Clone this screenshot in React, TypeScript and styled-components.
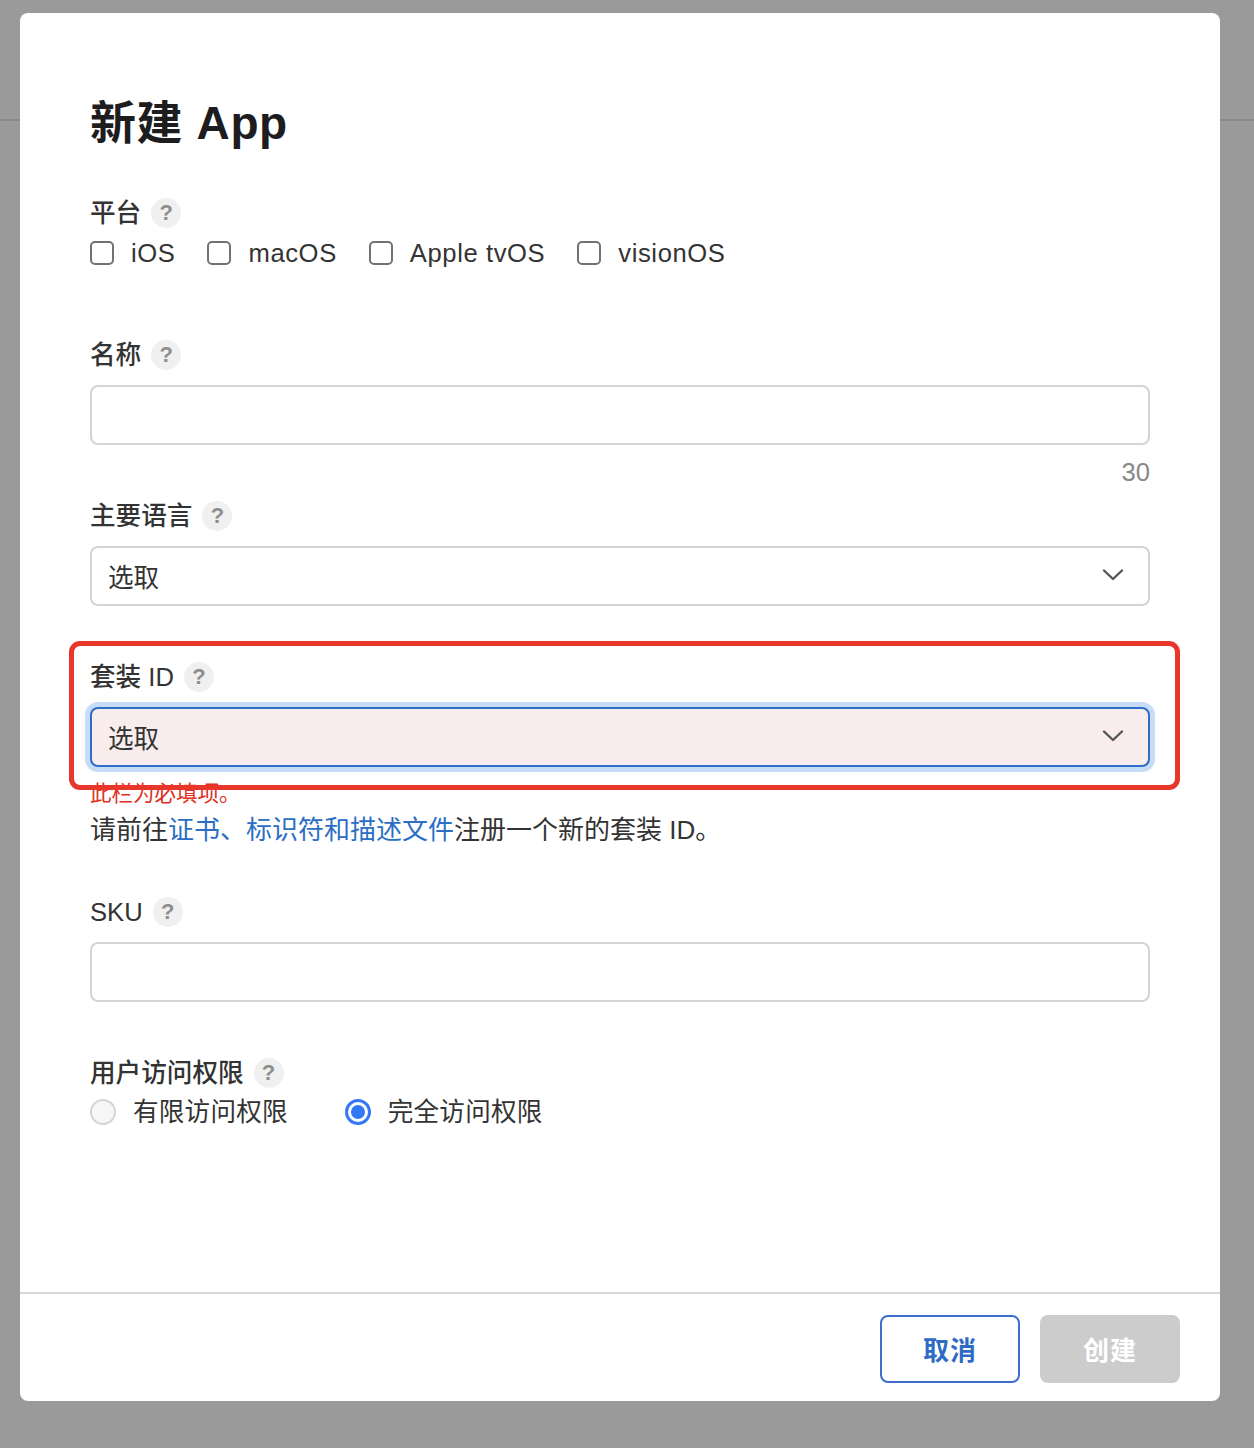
import React from "react";
import styled, { createGlobalStyle } from "styled-components";

const GlobalStyle = createGlobalStyle`
  html, body {
    margin: 0;
    padding: 0;
  }
  body {
    font-family: "Liberation Sans", "Noto Sans CJK SC", sans-serif;
    background: #9a9a9a;
  }
`;

const Page = styled.div`
  width: 1254px;
  height: 1448px;
  box-sizing: border-box;
  padding: 13px 0 0 20px;
  background: linear-gradient(
    to bottom,
    transparent 119px,
    #8a8a8a 119px,
    #8a8a8a 121px,
    transparent 121px
  );
`;

const Modal = styled.div`
  width: 1200px;
  height: 1388px;
  background: #fff;
  border-radius: 8px;
  display: flex;
  flex-direction: column;
  overflow: hidden;
`;

const Body = styled.div`
  flex: 1;
  padding: 82px 70px 0 70px;
  display: flex;
  flex-direction: column;
`;

const Title = styled.h1`
  margin: 0 0 46px;
  font-size: 46px;
  line-height: 56px;
  font-weight: 700;
  color: #1d1d1f;
  letter-spacing: 0.6px;
`;

const Field = styled.div<{ $gap?: number }>`
  position: relative;
  display: flex;
  flex-direction: column;
  margin-bottom: ${(p) => p.$gap ?? 0}px;
`;

const LabelRow = styled.div<{ $below?: number }>`
  display: flex;
  align-items: center;
  gap: 10px;
  height: 32px;
  line-height: 30px;
  margin-bottom: ${(p) => p.$below ?? 14}px;
  font-size: 25.6px;
  font-weight: 500;
  color: #333;
`;

const Help = styled.span`
  width: 30px;
  height: 30px;
  border-radius: 50%;
  background: #f0f0f0;
  color: #8e8e8e;
  font-size: 22px;
  font-weight: 700;
  display: inline-flex;
  align-items: center;
  justify-content: center;
`;

const OptionRow = styled.div<{ $gap: number }>`
  display: flex;
  align-items: center;
  gap: ${(p) => p.$gap}px;
  height: 32px;
  line-height: 30px;
`;

const Option = styled.label<{ $spacing?: number }>`
  display: flex;
  align-items: center;
  gap: 17px;
  font-size: 25.6px;
  color: #333;
  letter-spacing: ${(p) => p.$spacing ?? 0.2}px;
`;

const CheckBox = styled.span`
  width: 24px;
  height: 24px;
  box-sizing: border-box;
  border: 2px solid #727272;
  border-radius: 5px;
  background: #fff;
`;

const Radio = styled.span<{ $on?: boolean }>`
  width: 26px;
  height: 26px;
  box-sizing: border-box;
  border-radius: 50%;
  border: ${(p) => (p.$on ? "3px solid #3478f6" : "2px solid #d4d4d4")};
  background: ${(p) => (p.$on ? "#fff" : "#f6f6f6")};
  display: inline-flex;
  align-items: center;
  justify-content: center;
  &::after {
    content: "";
    display: ${(p) => (p.$on ? "block" : "none")};
    width: 14px;
    height: 14px;
    border-radius: 50%;
    background: #3478f6;
  }
`;

const TextBox = styled.div`
  height: 60px;
  box-sizing: border-box;
  border: 2px solid #d4d4d4;
  border-radius: 8px;
  background: #fff;
`;

const Select = styled.div<{ $invalid?: boolean }>`
  height: 60px;
  box-sizing: border-box;
  border: 2px solid ${(p) => (p.$invalid ? "#2e6ecb" : "#d4d4d4")};
  border-radius: 8px;
  background: ${(p) => (p.$invalid ? "#f8ecec" : "#fff")};
  box-shadow: ${(p) => (p.$invalid ? "0 0 0 5px #c6dcf7" : "none")};
  display: flex;
  align-items: center;
  justify-content: space-between;
  padding: 0 24px 2px 16px;
  font-size: 25.6px;
  color: #333;
`;

const Counter = styled.div`
  margin-top: 12px;
  text-align: right;
  font-size: 25.6px;
  line-height: 30px;
  height: 32px;
  color: #888;
  margin-bottom: 11px;
`;

const ErrorText = styled.div`
  margin-top: 14px;
  font-size: 21.5px;
  line-height: 26px;
  height: 28px;
  color: #e0301e;
`;

const Hint = styled.div`
  margin-top: 6px;
  font-size: 26px;
  line-height: 30px;
  height: 32px;
  color: #333;
`;

const Link = styled.a`
  color: #2a6ec6;
  text-decoration: none;
`;

const Annotation = styled.div`
  position: absolute;
  top: -20px;
  left: -21px;
  width: 1111px;
  height: 149px;
  box-sizing: border-box;
  border: 5px solid #e8362a;
  border-radius: 11px;
  pointer-events: none;
`;

const Footer = styled.div`
  border-top: 2px solid #d8d8d8;
  padding: 21px 40px 18px;
  display: flex;
  justify-content: flex-end;
  gap: 20px;
`;

const Button = styled.button<{ $primary?: boolean }>`
  width: 140px;
  height: 68px;
  box-sizing: border-box;
  border-radius: 8px;
  font-family: inherit;
  font-size: 26px;
  font-weight: 700;
  letter-spacing: 1px;
  padding-bottom: 3px;
  border: ${(p) => (p.$primary ? "none" : "2px solid #3a70c8")};
  background: ${(p) => (p.$primary ? "#cccccc" : "#fff")};
  color: ${(p) => (p.$primary ? "#fff" : "#2f6bc4")};
`;

const Chevron = () => (
  <svg width="22" height="14" viewBox="0 0 22 14" fill="none">
    <path d="M2 2.5 L11 11 L20 2.5" stroke="#555" strokeWidth="2.4" strokeLinecap="round" strokeLinejoin="round" />
  </svg>
);

const platforms = ["iOS", "macOS", "Apple tvOS", "visionOS"];

export default function App() {
  return (
    <>
      <GlobalStyle />
      <Page>
        <Modal>
          <Body>
            <Title>新建 App</Title>

            <Field $gap={70}>
              <LabelRow $below={8}>
                平台 <Help>?</Help>
              </LabelRow>
              <OptionRow $gap={32}>
                {platforms.map((p) => (
                  <Option key={p} $spacing={0.6}>
                    <CheckBox />
                    {p}
                  </Option>
                ))}
              </OptionRow>
            </Field>

            <Field>
              <LabelRow>
                名称 <Help>?</Help>
              </LabelRow>
              <TextBox />
              <Counter>30</Counter>
            </Field>

            <Field $gap={55}>
              <LabelRow>
                主要语言 <Help>?</Help>
              </LabelRow>
              <Select>
                选取
                <Chevron />
              </Select>
            </Field>

            <Field $gap={49}>
              <LabelRow>
                套装 ID <Help>?</Help>
              </LabelRow>
              <Select $invalid>
                选取
                <Chevron />
              </Select>
              <ErrorText>此栏为必填项。</ErrorText>
              <Hint>
                请前往<Link href="#">证书、标识符和描述文件</Link>注册一个新的套装 ID。
              </Hint>
              <Annotation />
            </Field>

            <Field $gap={55}>
              <LabelRow>
                SKU <Help>?</Help>
              </LabelRow>
              <TextBox />
            </Field>

            <Field>
              <LabelRow $below={7}>
                用户访问权限 <Help>?</Help>
              </LabelRow>
              <OptionRow $gap={57}>
                <Option>
                  <Radio />
                  有限访问权限
                </Option>
                <Option>
                  <Radio $on />
                  完全访问权限
                </Option>
              </OptionRow>
            </Field>
          </Body>
          <Footer>
            <Button>取消</Button>
            <Button $primary>创建</Button>
          </Footer>
        </Modal>
      </Page>
    </>
  );
}
